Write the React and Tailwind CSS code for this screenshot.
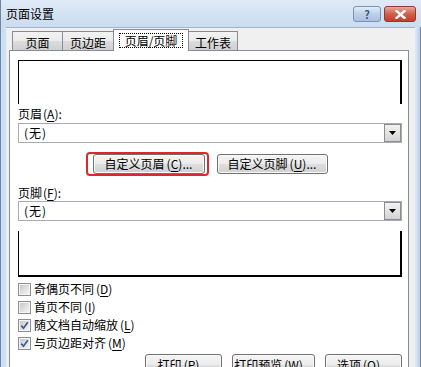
import React from 'react';

const btnBg = 'bg-[linear-gradient(#f4f4f4,#ececec_48%,#dedede_52%,#d0d0d0)]';

function U({ children }) {
    return <span className="underline underline-offset-[2px]">{children}</span>;
}

function Btn({ children, className = '' }) {
    return (
        <div className={`h-[20px] flex items-center justify-center rounded-[3px] border border-[#707070] ${btnBg} shadow-[inset_0_0_0_1px_#fafafa] text-[12px] leading-none text-black ${className}`}>
            {children}
        </div>
    );
}

function Select() {
    return (
        <div className="h-[20px] flex items-center border border-[#a9abb2] bg-white">
            <span className="flex-1 pl-[5px] text-[12px] leading-none tracking-[1px]">(无)</span>
            <div className="w-[17px] h-[18px] border border-[#8d8d8d] bg-[linear-gradient(#f2f2f2,#e4e4e4_50%,#d2d2d2)] flex items-center justify-center">
                <svg width="7" height="4" viewBox="0 0 7 4">
                    <path d="M0 0h7L3.5 4z" fill="#000" />
                </svg>
            </div>
        </div>
    );
}

function Check({ checked, label, k }) {
    return (
        <div className="h-[18px] flex items-center">
            <div className="w-[13px] h-[13px] border border-[#8f8f8f] bg-[#f4f4f4] p-[1px]">
                <div className="w-full h-full bg-gradient-to-br from-[#c9c9c9] to-[#f4f4f4] flex items-center justify-center">
                    {checked && (
                        <svg width="9" height="9" viewBox="0 0 9 9">
                            <path d="M1.3 4.6 L3.5 7.2 L7.8 1.3" stroke="#3d5a98" strokeWidth="1.7" fill="none" />
                        </svg>
                    )}
                </div>
            </div>
            <span className="ml-[3px] text-[12px] leading-none">
                {label}
                <span className="ml-[2px]">(<U>{k}</U>)</span>
            </span>
        </div>
    );
}

function Tab({ children, selected, className = '' }) {
    if (selected) {
        return (
            <div className={`relative z-10 h-[22px] border border-b-0 border-[#898c95] bg-white flex items-start justify-center pt-[3px] ${className}`}>
                <span className="border border-dotted border-black px-[5px] h-[15px] flex items-center text-[12px] leading-none">{children}</span>
            </div>
        );
    }
    return (
        <div className={`h-[20px] border border-[#898c95] bg-[linear-gradient(#f3f3f3,#ebebeb_50%,#dddddd_50%,#cfcfcf)] flex items-center justify-center pt-[3px] text-[12px] leading-none ${className}`}>
            {children}
        </div>
    );
}

export default function App() {
    return (
        <div className="w-[421px] h-[367px] overflow-hidden flex flex-col bg-[#c6d9ef] text-black font-['Noto_Sans_CJK_SC',sans-serif] select-none">
            {/* Title bar */}
            <div className="h-[27px] shrink-0 flex items-center bg-[linear-gradient(#dfeaf6,#cadcef)] border-l border-[#6d85a3]">
                <span className="ml-[5px] text-[12px] leading-none">页面设置</span>
                <div className="ml-auto flex items-start self-start mt-[6px] mr-[5px] gap-[3px]">
                    <div className="w-[28px] h-[16px] rounded-[3px] border border-[#7a93b3] bg-[linear-gradient(#e2ecf7,#bcd0ea_50%,#a9c1e2)] flex items-center justify-center text-[11px] leading-none text-[#3f5877] font-bold">
                        ?
                    </div>
                    <div className="w-[32px] h-[16px] rounded-[3px] border border-[#8e3a2f] bg-[linear-gradient(#e9a99c,#d0604c_50%,#c0402c)] flex items-center justify-center">
                        <svg width="11" height="9" viewBox="0 0 11 9">
                            <path d="M1.5 1 L9.5 8 M9.5 1 L1.5 8" stroke="#fff" strokeWidth="2.4" strokeLinecap="square" />
                        </svg>
                    </div>
                </div>
            </div>

            <div className="flex flex-1 min-h-0">
                {/* left frame */}
                <div className="w-[6px] shrink-0 border-l border-[#6d85a3] bg-[#cddff2]" />

                {/* client area */}
                <div className="w-[409px] shrink-0 bg-[#f0f0f0] border-t border-[#a0b4cb] pt-[1px]">
                    {/* tabs */}
                    <div className="flex items-end h-[22px] ml-[6px]">
                        <Tab className="w-[51px]">页面</Tab>
                        <Tab className="w-[52px] -ml-px">页边距</Tab>
                        <Tab selected className="w-[76px] -ml-px">页眉/页脚</Tab>
                        <Tab className="w-[50px] -ml-px">工作表</Tab>
                    </div>

                    {/* panel */}
                    <div className="-mt-px ml-[3px] w-[400px] h-[330px] border border-[#898c95] bg-white pl-[8px] pr-[6px] pt-[9px] flex flex-col">
                        {/* header preview */}
                        <div className="h-[44px] border-t border-l border-r-2 border-black" />
                        <div className="mt-[2px] h-[16px] flex items-center text-[12px] leading-none">
                            页眉<span className="ml-[1px]">(<U>A</U>):</span>
                        </div>
                        <div className="mt-[1px]">
                            <Select />
                        </div>

                        <div className="mt-[11px] flex justify-center gap-[12px]">
                            <div className="relative">
                                <Btn className="w-[112px]">自定义页眉<span className="ml-[2px]">(<U>C</U>)...</span></Btn>
                                <div className="absolute -left-[7px] -right-[4px] -top-[2px] -bottom-[2px] rounded-[4px] border-2 border-[#e0262d]" />
                            </div>
                            <Btn className="w-[111px]">自定义页脚<span className="ml-[2px]">(<U>U</U>)...</span></Btn>
                        </div>

                        <div className="mt-[11px] h-[16px] flex items-center text-[12px] leading-none">
                            页脚<span className="ml-[1px]">(<U>F</U>):</span>
                        </div>
                        <div>
                            <Select />
                        </div>

                        {/* footer preview */}
                        <div className="mt-[10px] h-[46px] border-l border-r-2 border-b-2 border-black" />

                        <div className="mt-[3px] flex flex-col">
                            <Check label="奇偶页不同" k="D" />
                            <Check label="首页不同" k="I" />
                            <Check checked label="随文档自动缩放" k="L" />
                            <Check checked label="与页边距对齐" k="M" />
                        </div>

                        <div className="mt-[2px] flex justify-end gap-[10px]">
                            <Btn className="w-[77px] h-[22px]">打印<span className="ml-[2px]">(<U>P</U>)...</span></Btn>
                            <Btn className="w-[83px] h-[22px]">打印预览<span className="ml-[2px]">(<U>W</U>)...</span></Btn>
                            <Btn className="w-[77px] h-[22px]">选项<span className="ml-[2px]">(<U>O</U>)...</span></Btn>
                        </div>
                    </div>
                </div>

                {/* right frame */}
                <div className="w-[6px] shrink-0 bg-[linear-gradient(90deg,#dfeaf6,#b9d0eb)] border-r border-[#6d85a3]" />
            </div>
        </div>
    );
}
